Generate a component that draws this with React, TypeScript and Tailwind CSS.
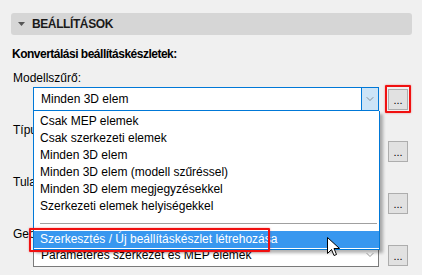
import { ChevronDown } from 'lucide-react';

const items = [
  'Csak MEP elemek',
  'Csak szerkezeti elemek',
  'Minden 3D elem',
  'Minden 3D elem (modell szűréssel)',
  'Minden 3D elem megjegyzésekkel',
  'Szerkezeti elemek helyiségekkel',
];

function DotsButton() {
  return (
    <div className="w-[20px] h-[21px] bg-[#e1e1e1] border border-[#adadad] flex items-center justify-center text-[11px] leading-none text-black pt-[3px]">
      ...
    </div>
  );
}

function Combo({ text, focused }: { text: string; focused?: boolean }) {
  return (
    <div
      className={`flex-1 h-[24px] bg-white flex items-center border ${
        focused ? 'border-[#0078d7]' : 'border-[#7a7a7a]'
      }`}
    >
      <span className="flex-1 pl-[7px] truncate">{text}</span>
      <div
        className={`w-[17px] h-full flex items-center justify-center ${
          focused ? 'bg-[#cce4f7] border-l border-[#0078d7]' : ''
        }`}
      >
        <ChevronDown size={12} strokeWidth={1.2} className="text-[#555]" />
      </div>
    </div>
  );
}

function Field({ label, text, focused }: { label: string; text: string; focused?: boolean }) {
  return (
    <div className="flex flex-col">
      <div className="h-[16px] leading-[16px] pl-[13px]">{label}</div>
      <div className="mt-[1px] flex items-center gap-[9px] pl-[33px] pr-[14px]">
        <Combo text={text} focused={focused} />
        <DotsButton />
      </div>
    </div>
  );
}

export default function App() {
  return (
    <div
      className="relative w-[422px] h-[275px] overflow-hidden bg-[#f0f0f0] text-[12px] text-black"
      style={{ fontFamily: '"Liberation Sans", Arial, sans-serif' }}
    >
      <div className="pt-[13px] px-[11px] pr-[10px]">
        <div className="h-[22px] rounded-[3px] bg-[#d6d6d6] flex items-center gap-[7px] pl-[7px]">
          <svg width="7" height="4" viewBox="0 0 7 4">
            <path d="M0 0 H7 L3.5 4 Z" fill="#555" />
          </svg>
          <span className="font-bold text-[12px] tracking-[-0.4px] text-[#1a1a1a]">BEÁLLÍTÁSOK</span>
        </div>
      </div>

      <div className="mt-[11px] h-[16px] leading-[16px] pl-[12px] font-bold tracking-[-0.5px]">
        Konvertálási beállításkészletek:
      </div>

      <div className="mt-[8px] flex flex-col gap-[11px]">
        <Field label="Modellszűrő:" text="Minden 3D elem" focused />
        <Field label="Típus:" text="" />
        <Field label="Tulajdonságok:" text="" />
        <Field label="Geometria:" text="Paraméteres szerkezet és MEP elemek" />
      </div>

      {/* open dropdown list */}
      <div className="absolute left-[33px] top-[111px] w-[347px] bg-white border border-[#0078d7] border-t-0 shadow-[3px_3px_3px_rgba(0,0,0,0.3)] pt-[2px] pb-[1px]">
        {items.map((t) => (
          <div key={t} className="h-[17px] leading-[17px] pl-[6px]">
            {t}
          </div>
        ))}
        <div className="h-[16px] flex items-center pl-[6px] pr-[2px]">
          <div className="w-full h-px bg-[#a0a0a0]" />
        </div>
        <div className="h-[17px] leading-[17px] pl-[6px] bg-[#3897ef] text-white">
          Szerkesztés / Új beállításkészlet létrehozása
        </div>
      </div>

      {/* red highlight frames */}
      <div className="absolute left-[385px] top-[85px] w-[26px] h-[28px] border-2 border-[#f01010] rounded-[1px] shadow-[0_0_2px_rgba(240,16,16,0.5)]" />
      <div className="absolute left-[29px] top-[228px] w-[241px] h-[24px] border-2 border-[#f01010] rounded-[1px] shadow-[0_0_2px_rgba(240,16,16,0.5)]" />

      {/* mouse cursor */}
      <svg className="absolute left-[327px] top-[237px]" width="13" height="20" viewBox="0 0 13 20">
        <path d="M0.5 0.5 V16.5 L4.5 12.5 L7 18.5 L9.5 17.5 L7 11.5 H12.5 Z" fill="white" stroke="black" strokeWidth="1" strokeLinejoin="round" />
      </svg>
    </div>
  );
}
